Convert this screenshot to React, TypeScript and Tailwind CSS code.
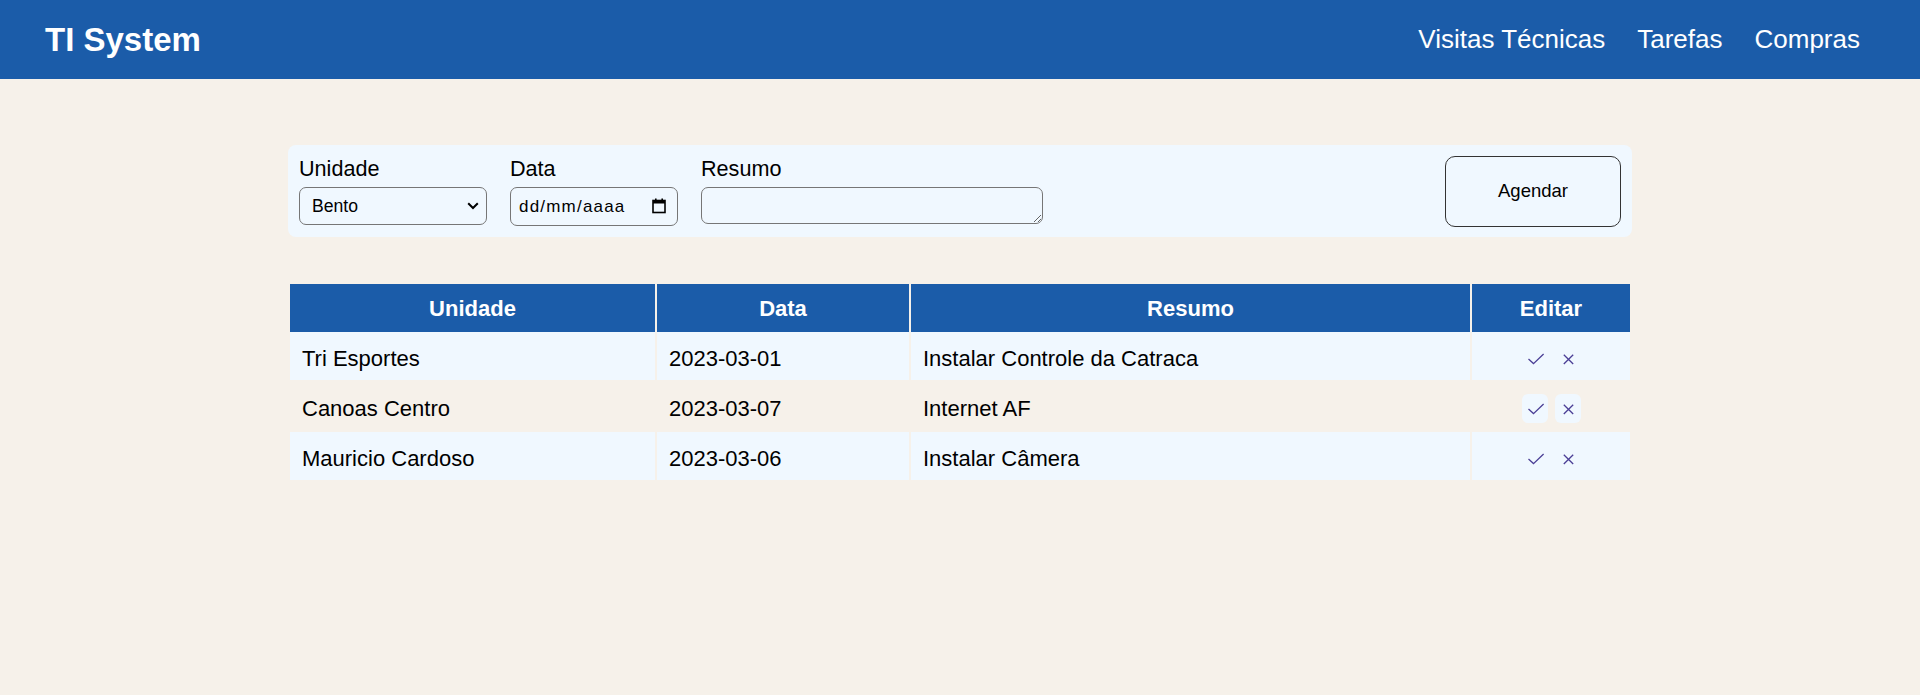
import { useState } from "react";

type Visita = {
  id: number;
  unidade: string;
  data: string;
  resumo: string;
};

const visitas: Visita[] = [
  { id: 1, unidade: "Tri Esportes", data: "2023-03-01", resumo: "Instalar Controle da Catraca" },
  { id: 2, unidade: "Canoas Centro", data: "2023-03-07", resumo: "Internet AF" },
  { id: 3, unidade: "Mauricio Cardoso", data: "2023-03-06", resumo: "Instalar Câmera" },
];

function CheckIcon() {
  return (
    <svg width="26" height="29" viewBox="0 0 26 29" fill="none">
      <path d="M6.5 15 L11.5 19.6 L21.6 10" stroke="#4b3f96" strokeWidth="1.3" />
    </svg>
  );
}

function XIcon() {
  return (
    <svg width="26" height="29" viewBox="0 0 26 29" fill="none">
      <path d="M8.8 10.8 L18.2 20 M18.2 10.8 L8.8 20" stroke="#4b3f96" strokeWidth="1.3" />
    </svg>
  );
}

export default function App() {
  const [unidade, setUnidade] = useState<string>("Bento");
  const [resumo, setResumo] = useState<string>("");

  const handleSubmit = (e: React.FormEvent<HTMLFormElement>) => {
    e.preventDefault();
  };

  return (
    <div className="min-h-screen bg-[#f6f1ea] font-['Liberation_Sans',Arial,sans-serif] text-black">
      <header className="h-[79px] bg-[#1b5ca9] flex items-center justify-between pl-[45px] pr-[60px] text-white">
        <h1 className="text-[33px] font-bold">TI System</h1>
        <nav className="flex gap-8 text-[26px]">
          <a href="#">Visitas Técnicas</a>
          <a href="#">Tarefas</a>
          <a href="#">Compras</a>
        </nav>
      </header>

      <main className="w-[1344px] mx-auto pt-[66px]">
        <form
          onSubmit={handleSubmit}
          className="h-[92px] bg-[#f0f8ff] rounded-lg pl-[11px] pr-[11px] pt-[12px] flex items-start gap-[23px]"
        >
          <div className="flex flex-col gap-[5px]">
            <label htmlFor="unidade" className="text-[21.6px] leading-[24.8px]">
              Unidade
            </label>
            <div className="relative w-[188px] h-[38px]">
              <select
                id="unidade"
                value={unidade}
                onChange={(e) => setUnidade(e.target.value)}
                className="appearance-none w-full h-full border border-[#767676] rounded-[7px] bg-transparent pl-[12px] text-[17.6px] outline-none"
              >
                <option value="Bento">Bento</option>
                <option value="Canoas Centro">Canoas Centro</option>
                <option value="Tri Esportes">Tri Esportes</option>
                <option value="Mauricio Cardoso">Mauricio Cardoso</option>
              </select>
              <svg
                className="absolute right-[8px] top-[15px] pointer-events-none"
                width="12"
                height="8"
                viewBox="0 0 12 8"
                fill="none"
              >
                <path d="M1.2 1.2 L6 6 L10.8 1.2" stroke="#000" strokeWidth="2" />
              </svg>
            </div>
          </div>

          <div className="flex flex-col gap-[5px]">
            <label className="text-[21.6px] leading-[24.8px]">Data</label>
            <div className="w-[168px] h-[39px] border border-[#767676] rounded-[7px] flex items-center justify-between pl-[8px] pr-[11px]">
              <span className="text-[17px] tracking-[1.2px]">dd/mm/aaaa</span>
              <svg width="14" height="16" viewBox="0 0 14 16" fill="none">
                <rect x="1" y="2.5" width="12" height="12" stroke="#000" strokeWidth="1.6" />
                <rect x="1" y="2.5" width="12" height="3" fill="#000" />
                <rect x="3" y="0.5" width="1.6" height="3" fill="#000" />
                <rect x="9.4" y="0.5" width="1.6" height="3" fill="#000" />
              </svg>
            </div>
          </div>

          <div className="flex flex-col gap-[5px]">
            <label htmlFor="resumo" className="text-[21.6px] leading-[24.8px]">
              Resumo
            </label>
            <textarea
              id="resumo"
              value={resumo}
              onChange={(e) => setResumo(e.target.value)}
              className="w-[342px] h-[37px] border border-[#767676] rounded-[7px] bg-transparent outline-none"
            />
          </div>

          <button
            type="submit"
            className="ml-auto self-center -mt-[12px] w-[176px] h-[71px] border border-[#333] rounded-[10px] text-[18.5px]"
          >
            Agendar
          </button>
        </form>

        <table className="w-full mt-[47px] table-fixed border-separate border-spacing-x-[2px] border-spacing-y-0">
          <thead>
            <tr>
              <th className="w-[365px] h-[48px] bg-[#1b5ca9] text-white text-[22px] font-bold">Unidade</th>
              <th className="w-[252px] h-[48px] bg-[#1b5ca9] text-white text-[22px] font-bold">Data</th>
              <th className="w-[559px] h-[48px] bg-[#1b5ca9] text-white text-[22px] font-bold">Resumo</th>
              <th className="w-[158px] h-[48px] bg-[#1b5ca9] text-white text-[22px] font-bold">Editar</th>
            </tr>
          </thead>
          <tbody>
            {visitas.map((v, i) => {
              const bg = i % 2 === 0 ? "bg-[#f0f8ff]" : "bg-transparent";
              return (
                <tr key={v.id}>
                  <td className={`${bg} h-[50px] border-b-2 border-transparent bg-clip-padding px-3 pt-[4px] text-[22px]`}>
                    {v.unidade}
                  </td>
                  <td className={`${bg} h-[50px] border-b-2 border-transparent bg-clip-padding px-3 pt-[4px] text-[22px]`}>
                    {v.data}
                  </td>
                  <td className={`${bg} h-[50px] border-b-2 border-transparent bg-clip-padding px-3 pt-[4px] text-[22px]`}>
                    {v.resumo}
                  </td>
                  <td className={`${bg} h-[50px] border-b-2 border-transparent bg-clip-padding pt-[4px]`}>
                    <div className="flex justify-center gap-[7px]">
                      <button className="w-[26px] h-[29px] rounded-md bg-[#f0f8ff]">
                        <CheckIcon />
                      </button>
                      <button className="w-[26px] h-[29px] rounded-md bg-[#f0f8ff]">
                        <XIcon />
                      </button>
                    </div>
                  </td>
                </tr>
              );
            })}
          </tbody>
        </table>
      </main>
    </div>
  );
}
